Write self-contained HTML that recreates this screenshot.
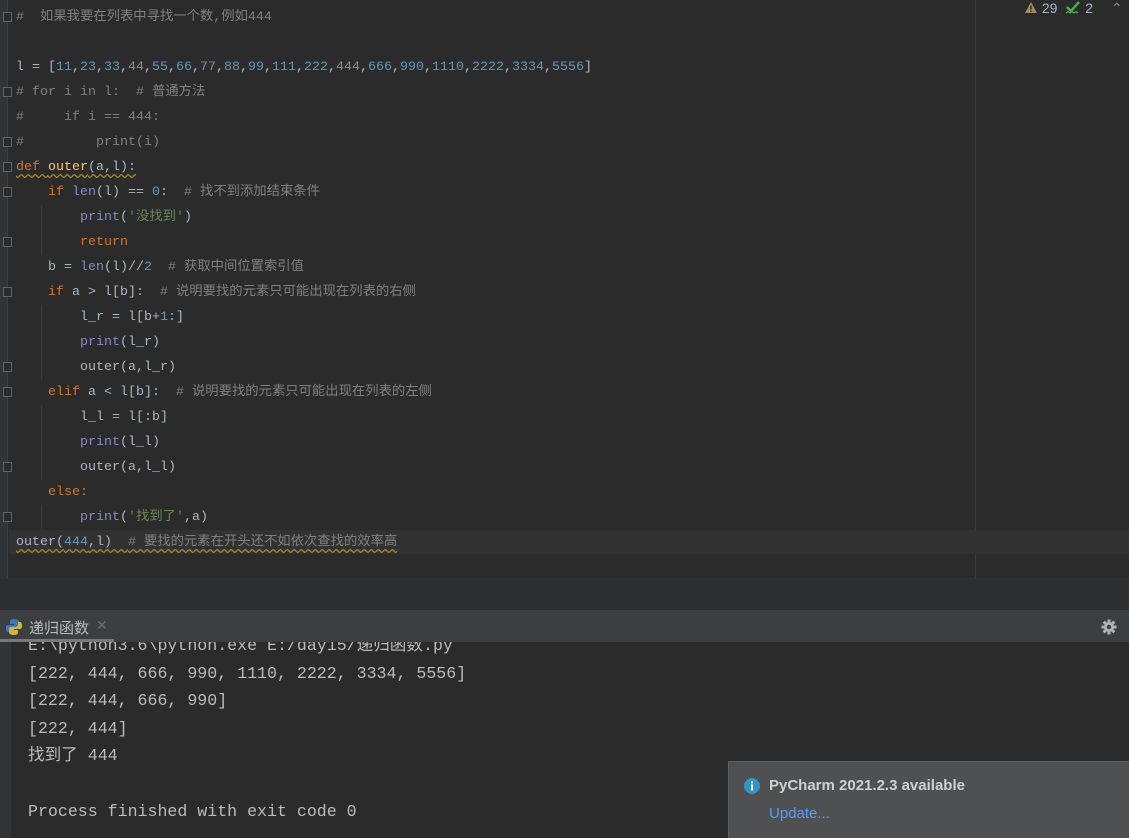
<!DOCTYPE html>
<html><head><meta charset="utf-8"><style>
*{margin:0;padding:0;box-sizing:border-box}
body{width:1129px;height:838px;background:#2b2b2b;overflow:hidden;position:relative;font-family:"Liberation Mono","Noto Sans CJK SC",monospace}
.ed{position:absolute;left:0;top:0;width:1129px;height:578px;background:#2b2b2b}
.gut{position:absolute;left:0;top:0;width:8px;height:578px;background:#313335;border-right:1px solid #3c3f41}
.mar{position:absolute;left:975px;top:0;width:1px;height:578px;background:#3a3a3a}
.ln{position:absolute;left:16px;height:25px;line-height:25px;font-size:13.33px;color:#a9b7c6;white-space:pre}
.k{color:#cc7832}.n{color:#6897bb}.c{color:#808080}.s{color:#6a8759}.b{color:#8888c6}.f{color:#ffc66d}
.w{text-decoration:underline wavy #a08a2a;text-underline-offset:3px}
.cur{position:absolute;left:9px;top:530px;width:1120px;height:24px;background:#323232}
.fold{position:absolute;left:3px;width:9px;height:10px;border:1px solid #606366;background:#2b2b2b}
.ig{position:absolute;width:1px;background:#393939}
.gap{position:absolute;left:0;top:578px;width:1129px;height:32px;background:#2d2e30;border-top:1px solid #323232}
.hdr{position:absolute;left:0;top:610px;width:1129px;height:32px;background:#3c3f41;z-index:2}
.con{position:absolute;left:0;top:642px;width:1129px;height:196px;background:#2b2b2b;overflow:hidden}
.cl{position:absolute;left:28px;font-size:16.6px;color:#bbbbbb;white-space:pre;line-height:20px}
.note{position:absolute;left:728px;top:761px;width:401px;height:77px;background:#4e5052;border-top:1px solid #5e6062;border-left:1px solid #5e6062;z-index:3}
</style></head><body>
<div class="ed">
<div class="gut"></div>
<div class="mar"></div>
<div class="cur"></div>
<div class="ig" style="left:41px;top:205px;height:50px"></div>
<div class="ig" style="left:41px;top:305px;height:75px"></div>
<div class="ig" style="left:41px;top:405px;height:75px"></div>
<div class="ig" style="left:41px;top:505px;height:25px"></div>
<div class="fold" style="top:12px"></div>
<div class="fold" style="top:87px"></div>
<div class="fold" style="top:137px"></div>
<div class="fold" style="top:162px"></div>
<div class="fold" style="top:187px"></div>
<div class="fold" style="top:237px"></div>
<div class="fold" style="top:287px"></div>
<div class="fold" style="top:362px"></div>
<div class="fold" style="top:387px"></div>
<div class="fold" style="top:462px"></div>
<div class="fold" style="top:512px"></div>
<div class="ln c" style="top:5px">#  如果我要在列表中寻找一个数,例如444</div>
<div class="ln" style="top:55px">l = [<span class="n">11</span>,<span class="n">23</span>,<span class="n">33</span>,<span class="n">44</span>,<span class="n">55</span>,<span class="n">66</span>,<span class="n">77</span>,<span class="n">88</span>,<span class="n">99</span>,<span class="n">111</span>,<span class="n">222</span>,<span class="n">444</span>,<span class="n">666</span>,<span class="n">990</span>,<span class="n">1110</span>,<span class="n">2222</span>,<span class="n">3334</span>,<span class="n">5556</span>]</div>
<div class="ln c" style="top:80px"># for i in l:  # 普通方法</div>
<div class="ln c" style="top:105px">#     if i == 444:</div>
<div class="ln c" style="top:130px">#         print(i)</div>
<div class="ln" style="top:155px"><span class="w"><span class="k">def </span><span class="f">outer</span>(a,l):</span></div>
<div class="ln" style="top:180px">    <span class="k">if </span><span class="b">len</span>(l) == <span class="n">0</span>:  <span class="c"># 找不到添加结束条件</span></div>
<div class="ln" style="top:205px">        <span class="b">print</span>(<span class="s">'没找到'</span>)</div>
<div class="ln k" style="top:230px">        return</div>
<div class="ln" style="top:255px">    b = <span class="b">len</span>(l)//<span class="n">2</span>  <span class="c"># 获取中间位置索引值</span></div>
<div class="ln" style="top:280px">    <span class="k">if </span>a &gt; l[b]:  <span class="c"># 说明要找的元素只可能出现在列表的右侧</span></div>
<div class="ln" style="top:305px">        l_r = l[b+<span class="n">1</span>:]</div>
<div class="ln" style="top:330px">        <span class="b">print</span>(l_r)</div>
<div class="ln" style="top:355px">        outer(a,l_r)</div>
<div class="ln" style="top:380px">    <span class="k">elif </span>a &lt; l[b]:  <span class="c"># 说明要找的元素只可能出现在列表的左侧</span></div>
<div class="ln" style="top:405px">        l_l = l[:b]</div>
<div class="ln" style="top:430px">        <span class="b">print</span>(l_l)</div>
<div class="ln" style="top:455px">        outer(a,l_l)</div>
<div class="ln k" style="top:480px">    else:</div>
<div class="ln" style="top:505px">        <span class="b">print</span>(<span class="s">'找到了'</span>,a)</div>
<div class="ln" style="top:530px"><span class="w">outer(<span class="n">444</span>,l)  <span class="c"># 要找的元素在开头还不如依次查找的效率高</span></span></div>
<div style="position:absolute;left:1024px;top:0;font:14px 'Liberation Sans',sans-serif;color:#a9b7c6;line-height:16px">
<svg width="14" height="13" viewBox="0 0 14 13" style="vertical-align:-1px"><path d="M7 1L13 12H1Z" fill="#a08b5f"/><rect x="6.3" y="4.5" width="1.4" height="4" fill="#2b2b2b"/><rect x="6.3" y="9.5" width="1.4" height="1.4" fill="#2b2b2b"/></svg> 29
<svg width="16" height="14" viewBox="0 0 16 14" style="vertical-align:-2px;margin-left:4px"><path d="M2 6l4 4 8-9" stroke="#4caf50" stroke-width="2.4" fill="none"/><path d="M1 12l2-1.5 2 1.5 2-1.5 2 1.5 2-1.5 2 1.5" stroke="#4caf50" stroke-width="1.2" fill="none"/></svg> 2
<span style="color:#888;margin-left:14px">⌃</span></div>
</div>
<div class="gap"></div>
<div class="hdr">
<svg width="18" height="18" viewBox="0 0 18 18" style="position:absolute;left:5px;top:8px"><path d="M9 1C5 1 5 3 5 4v2h4v1H3C1 7 1 9 1 10s0 4 2 4h2v-2c0-2 1-3 3-3h4c1 0 2-1 2-2V4c0-2-2-3-5-3z" fill="#3d7ab8"/><path d="M9 17c4 0 4-2 4-3v-2H9v-1h6c2 0 2-2 2-3s0-4-2-4h-2v2c0 2-1 3-3 3H6c-1 0-2 1-2 2v3c0 2 2 3 5 3z" fill="#d4b43c"/></svg>
<span style="position:absolute;left:29px;top:7px;font:15px 'Liberation Sans','Noto Sans CJK SC',sans-serif;color:#bbbbbb">递归函数</span>
<span style="position:absolute;left:96px;top:7px;font:14px 'Liberation Sans',sans-serif;color:#6e6e6e">✕</span>
<div style="position:absolute;left:0;top:29px;width:114px;height:3px;background:#747a80"></div>
<svg width="16" height="16" viewBox="0 0 16 16" style="position:absolute;left:1101px;top:9px"><g fill="#afb1b3"><circle cx="8" cy="8" r="5"/><rect x="6.5" y="0.5" width="3" height="15"/><rect x="0.5" y="6.5" width="15" height="3"/><rect x="6.5" y="0.5" width="3" height="15" transform="rotate(45 8 8)"/><rect x="6.5" y="0.5" width="3" height="15" transform="rotate(-45 8 8)"/></g><circle cx="8" cy="8" r="2.2" fill="#3c3f41"/></svg>
</div>
<div class="con">
<div style="position:absolute;left:0;top:0;width:11px;height:196px;background:#313335"></div>
<div class="cl" style="top:-6px">E:\python3.6\python.exe E:/day15/递归函数.py</div>
<div class="cl" style="top:22px">[222, 444, 666, 990, 1110, 2222, 3334, 5556]</div>
<div class="cl" style="top:49px">[222, 444, 666, 990]</div>
<div class="cl" style="top:77px">[222, 444]</div>
<div class="cl" style="top:104px">找到了 444</div>
<div class="cl" style="top:160px">Process finished with exit code 0</div>
</div>
<div class="note">
<svg width="18" height="18" viewBox="0 0 18 18" style="position:absolute;left:14px;top:15px"><circle cx="9" cy="9" r="8" fill="#3592c4"/><rect x="8" y="7.5" width="2" height="6" fill="#fff"/><rect x="8" y="4.3" width="2" height="2" fill="#fff"/></svg>
<span style="position:absolute;left:40px;top:15px;font:bold 15px 'Liberation Sans',sans-serif;color:#d0d0d0">PyCharm 2021.2.3 available</span>
<span style="position:absolute;left:40px;top:43px;font:15px 'Liberation Sans',sans-serif;color:#589df6">Update...</span>
</div>
</body></html>
